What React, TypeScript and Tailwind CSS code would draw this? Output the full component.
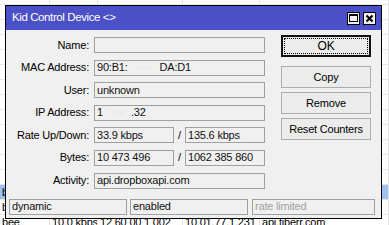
import React from 'react';

// only the cells that peek out from behind the dialog carry text
const rows = [
  ['', '', '', '', ''],
  ['', '', '', '', ''],
  ['', '', '', '', 'clients4.google.com'],
  ['', '', '', '', ''],
  ['', '', '', '', ''],
  ['', '', '', '', 'ec2.eu-west-1.compute'],
  ['', '', '', '', ''],
  ['', '', '', '', ''],
  ['', '', '', '', ''],
  ['', '', '', '', ''],
  ['', '', '', '', ''],
  ['', '', '', '', ''],
  ['', '', '', '', ''],
  ['bee', '', '', '', ''],
  ['bee', '', '', '', ''],
  ['bee', '10.0 kbps', '12 60 00 1 002', '10.01.77.1.231', 'api.tiberr.com'],
];

const colWidths = ['w-[50px]', 'w-[48px]', 'w-[85px]', 'w-[77px]', 'w-[129px]'];

function Field({ children, className = '', muted = false }: { children?: React.ReactNode; className?: string; muted?: boolean }) {
  return (
    <div
      className={`h-[16px] border border-[#a0a0a0] bg-[#f0f0f0] px-[2px] flex items-center whitespace-nowrap overflow-hidden ${
        muted ? 'text-[#a0a0a0]' : 'text-[#101010]'
      } ${className}`}
    >
      {children}
    </div>
  );
}

function Row({ label, children }: { label: string; children: React.ReactNode }) {
  return (
    <div className="flex items-center h-[16px]">
      <div className="w-[83px] text-right text-black">{label}</div>
      <div className="ml-[5px] flex items-center">{children}</div>
    </div>
  );
}

function Blur({ w }: { w: string }) {
  return (
    <span className={`inline-flex items-center justify-center ${w} h-[10px] text-[#c8c8c8]`}>
      <span className="blur-[1px]">· ··</span>
    </span>
  );
}

function Btn({ children, primary = false }: { children: React.ReactNode; primary?: boolean }) {
  return (
    <div
      className={`relative w-[90px] h-[22px] flex items-center justify-center text-black bg-[#ececec] ${
        primary ? 'border-2 border-[#111]' : 'border border-[#adadad]'
      }`}
    >
      {primary && <div className="absolute inset-[1px] border border-dotted border-black" />}
      <span className={primary ? 'text-[12px]' : ''}>{children}</span>
    </div>
  );
}

export default function App() {
  return (
    <div className="relative w-[389px] h-[225px] overflow-hidden bg-white font-['Liberation_Sans',Arial,sans-serif] text-[11px] tracking-[-0.2px] leading-none">
      {/* table behind the window */}
      <div className="mt-[-10px] flex flex-col">
        {rows.map((r, i) => (
          <div
            key={i}
            className={`flex h-[15px] border-b border-[#e8e8e8] ${i === 13 ? 'bg-[#9fc3ef]' : ''}`}
          >
            {r.map((c, j) => (
              <div
                key={j}
                className={`${colWidths[j]} shrink-0 h-full border-r border-[#e2e2e2] px-[2px] flex items-center whitespace-nowrap overflow-hidden text-black`}
              >
                {c}
              </div>
            ))}
          </div>
        ))}
      </div>

      {/* dialog window */}
      <div className="absolute left-[5px] top-[5px] w-[377px] h-[214px] border border-black bg-[#f0f0f0] flex flex-col">
        <div className="h-[24px] bg-[#4c50c6] flex items-center pl-[6px] pr-[5px] shrink-0">
          <span className="text-white text-[11.5px] tracking-[-0.4px]">Kid Control Device &lt;&gt;</span>
          <div className="ml-auto flex gap-[3px]">
            <div className="w-[13px] h-[13px] bg-[#f0f0f0] border border-black flex items-center justify-center">
              <div className="w-[9px] h-[8px] border border-black border-t-2" />
            </div>
            <div className="w-[13px] h-[13px] bg-[#f0f0f0] border border-black flex items-center justify-center">
              <svg width="9" height="9" viewBox="0 0 9 9">
                <path d="M1.5 1.5 L7.5 7.5 M7.5 1.5 L1.5 7.5" stroke="#000" strokeWidth="2" />
              </svg>
            </div>
          </div>
        </div>

        <div className="flex items-start">
          <div className="mt-[7px] flex flex-col gap-[6.6px]">
            <Row label="Name:">
              <Field className="w-[171px]" />
            </Row>
            <Row label="MAC Address:">
              <Field className="w-[171px]">
                90:B1:<Blur w="w-[32px]" />DA:D1
              </Field>
            </Row>
            <Row label="User:">
              <Field className="w-[171px]">unknown</Field>
            </Row>
            <Row label="IP Address:">
              <Field className="w-[171px]">
                1<Blur w="w-[28px]" />.32
              </Field>
            </Row>
            <Row label="Rate Up/Down:">
              <Field className="w-[80px]">33.9 kbps</Field>
              <span className="w-[11px] text-center text-black">/</span>
              <Field className="w-[80px]">135.6 kbps</Field>
            </Row>
            <Row label="Bytes:">
              <Field className="w-[80px]">10 473 496</Field>
              <span className="w-[11px] text-center text-black">/</span>
              <Field className="w-[80px]">1062 385 860</Field>
            </Row>
            <Row label="Activity:">
              <Field className="w-[171px]">api.dropboxapi.com</Field>
            </Row>
          </div>

          <div className="ml-[16px] mt-[5px] flex flex-col">
            <Btn primary>OK</Btn>
            <div className="mt-[9px] flex flex-col gap-[4px]">
              <Btn>Copy</Btn>
              <Btn>Remove</Btn>
              <Btn>Reset Counters</Btn>
            </div>
          </div>
        </div>

        <div className="mt-[10px] ml-[3px] flex">
          <Field className="w-[118px]">dynamic</Field>
          <Field className="w-[118px] ml-[3px]">enabled</Field>
          <Field className="w-[123px] ml-[4px]" muted>
            rate limited
          </Field>
        </div>
      </div>
    </div>
  );
}
